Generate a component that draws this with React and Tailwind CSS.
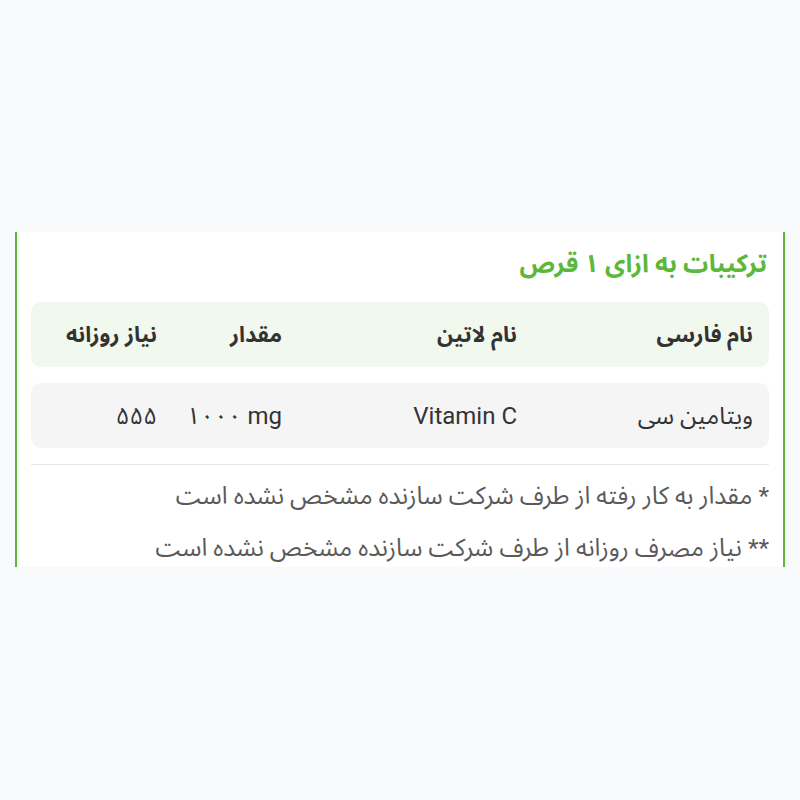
export default function App() {
  const font = { fontFamily: 'Roboto, "Noto Sans Arabic", "Vazirmatn", "DejaVu Sans", sans-serif' };
  return (
    <div dir="rtl" className="min-h-[800px] bg-[#f9fafc] pt-[232px]" style={font}>
      <div className="mx-[15px] h-[335px] bg-white border-l-2 border-r-2 border-[#5cb83a] px-[14px] overflow-hidden">
        <h2 className="text-[25px] font-bold text-[#5cb83a] leading-[64px] pr-[2px]">ترکیبات به ازای ۱ قرص</h2>
        <div className="mt-[6px] h-[65px] rounded-[10px] bg-[#f1f8ee] flex items-center pr-[16px] text-[22px] font-bold text-[#333]">
          <div className="w-[236px]">نام فارسی</div>
          <div className="w-[235px]">نام لاتین</div>
          <div className="w-[125px]">مقدار</div>
          <div>نیاز روزانه</div>
        </div>
        <div className="mt-[16px] h-[65px] rounded-[10px] bg-[#f5f5f5] flex items-center pr-[16px] text-[24px] text-[#333]">
          <div className="w-[236px]">ویتامین سی</div>
          <div className="w-[235px]">Vitamin C</div>
          <div className="w-[125px]"><span dir="ltr">۱۰۰۰ mg</span></div>
          <div>۵۵۵</div>
        </div>
        <div className="mt-[16px] border-t border-[#e6e6e6]" />
        <p className="mt-[14px] text-[24.5px] text-[#5a5a5a] leading-[34px]">* مقدار به کار رفته از طرف شرکت سازنده مشخص نشده است</p>
        <p className="mt-[18px] text-[24.5px] text-[#5a5a5a] leading-[34px]">** نیاز مصرف روزانه از طرف شرکت سازنده مشخص نشده است</p>
      </div>
    </div>
  );
}
